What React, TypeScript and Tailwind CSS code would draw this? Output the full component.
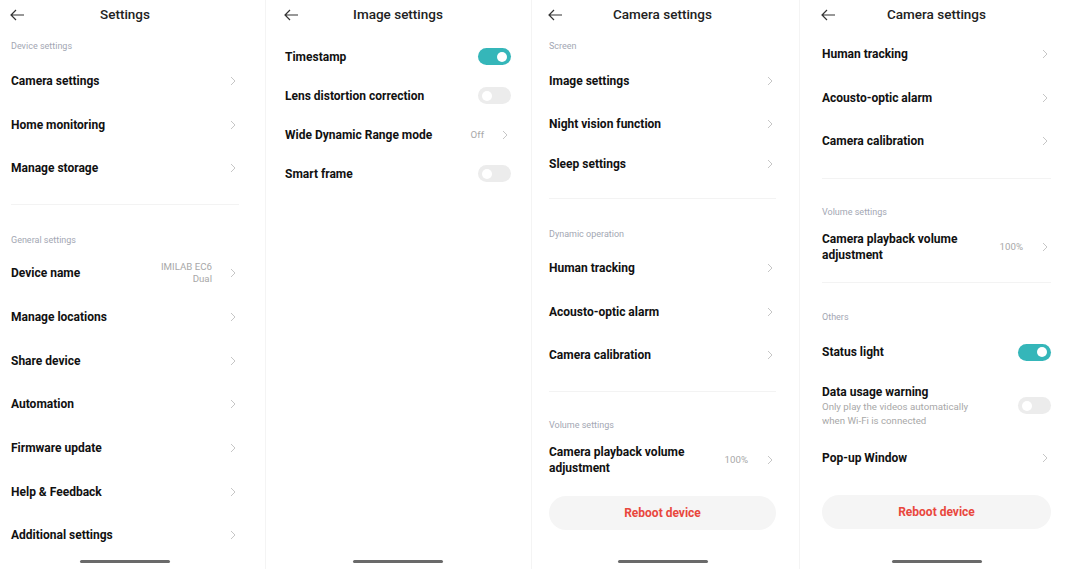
import React from "react";

type RowProps = {
  label: string;
  h: string;
  value?: React.ReactNode;
  chevron?: boolean;
  toggle?: "on" | "off";
};

const Chevron = () => (
  <svg width="6" height="10" viewBox="0 0 6 10" className="mr-[3px] shrink-0">
    <path d="M1 1 L5 5 L1 9" fill="none" stroke="#c6c6c6" strokeWidth="1" />
  </svg>
);

const Toggle = ({ on }: { on: boolean }) => (
  <div
    className={`w-[33px] h-[17px] rounded-full flex items-center px-[4px] shrink-0 ${
      on ? "bg-[#35b6b9] justify-end" : "bg-[#ececec] justify-start"
    }`}
  >
    <div className="w-[10px] h-[10px] rounded-full bg-white" />
  </div>
);

const Row = ({ label, h, value, chevron = true, toggle }: RowProps) => (
  <div className={`flex items-center justify-between ${h}`}>
    <div className="text-[12px] font-bold text-[#111] leading-[16px]">{label}</div>
    <div className="flex items-center gap-[18px]">
      {value && <div className="text-[9.7px] text-[#a8a8a8] text-right leading-[12px]">{value}</div>}
      {toggle ? <Toggle on={toggle === "on"} /> : chevron && <Chevron />}
    </div>
  </div>
);

const Header = ({ title }: { title: string }) => (
  <div className="relative h-[30px] flex items-center justify-center">
    <svg width="15" height="12" viewBox="0 0 15 12" className="absolute left-[-1px] top-[9px]">
      <path d="M14 6 H1.2 M6 1 L1 6 L6 11" fill="none" stroke="#333" strokeWidth="1.2" />
    </svg>
    <div className="text-[13.5px] font-medium text-[#222] -mt-px">{title}</div>
  </div>
);

const Label = ({ text, h }: { text: string; h: string }) => (
  <div className={`flex items-center ${h} text-[9px] text-[#a3a7b3]`}>{text}</div>
);

const Divider = ({ mt }: { mt: string }) => <div className={`${mt} h-px bg-[#f3f3f3]`} />;

const HomeBar = () => (
  <div className="mt-auto mb-[6px] flex justify-center">
    <div className="w-[90px] h-[3px] rounded-full bg-[#6a6a6a]" />
  </div>
);

const Reboot = ({ mt }: { mt: string }) => (
  <div className={`${mt} h-[34px] rounded-full bg-[#f5f5f5] flex items-center justify-center text-[12px] font-bold text-[#e9473d]`}>
    Reboot device
  </div>
);

const TwoLine = ({ h }: { h: string }) => (
  <div className={`flex items-center justify-between ${h}`}>
    <div className="text-[12px] font-bold text-[#111] leading-[16px]">
      Camera playback volume
      <br />
      adjustment
    </div>
    <div className="flex items-center gap-[19px]">
      <div className="text-[9.7px] text-[#a8a8a8]">100%</div>
      <Chevron />
    </div>
  </div>
);

export default function App() {
  return (
    <div className="w-[1076px] h-[569px] bg-white flex font-['Roboto',sans-serif] overflow-hidden">
      {/* Settings */}
      <div className="w-[266px] h-full flex flex-col pl-[11px] pr-[26px] border-r border-[#f4f4f4]">
        <Header title="Settings" />
        <Label text="Device settings" h="h-[22px] mt-[6px]" />
        <Row label="Camera settings" h="h-[45px]" />
        <Row label="Home monitoring" h="h-[43px]" />
        <Row label="Manage storage" h="h-[43px]" />
        <Divider mt="mt-[15px]" />
        <Label text="General settings" h="h-[21px] mt-[25px]" />
        <Row
          label="Device name"
          h="h-[44px]"
          value={
            <>
              IMILAB EC6
              <br />
              Dual
            </>
          }
        />
        <Row label="Manage locations" h="h-[44px]" />
        <Row label="Share device" h="h-[43px]" />
        <Row label="Automation" h="h-[44px]" />
        <Row label="Firmware update" h="h-[44px]" />
        <Row label="Help & Feedback" h="h-[43px]" />
        <Row label="Additional settings" h="h-[44px]" />
        <HomeBar />
      </div>

      {/* Image settings */}
      <div className="w-[266px] h-full flex flex-col pl-[19px] pr-[20px] border-r border-[#f4f4f4]">
        <Header title="Image settings" />
        <div className="mt-[7px]" />
        <Row label="Timestamp" h="h-[39px]" toggle="on" />
        <Row label="Lens distortion correction" h="h-[39px]" toggle="off" />
        <Row label="Wide Dynamic Range mode" h="h-[39px]" value="Off" />
        <Row label="Smart frame" h="h-[39px]" toggle="off" />
        <HomeBar />
      </div>

      {/* Camera settings */}
      <div className="w-[268px] h-full flex flex-col pl-[17px] pr-[23px] border-r border-[#f4f4f4]">
        <Header title="Camera settings" />
        <Label text="Screen" h="h-[22px] mt-[6px]" />
        <Row label="Image settings" h="h-[45px]" />
        <Row label="Night vision function" h="h-[42px]" />
        <Row label="Sleep settings" h="h-[38px]" />
        <Divider mt="mt-[15px]" />
        <Label text="Dynamic operation" h="h-[22px] mt-[25px]" />
        <Row label="Human tracking" h="h-[44px]" />
        <Row label="Acousto-optic alarm" h="h-[43px]" />
        <Row label="Camera calibration" h="h-[44px]" />
        <Divider mt="mt-[14px]" />
        <Label text="Volume settings" h="h-[22px] mt-[23px]" />
        <TwoLine h="h-[46px]" />
        <Reboot mt="mt-[13px]" />
        <HomeBar />
      </div>

      {/* Camera settings (scrolled) */}
      <div className="w-[276px] h-full flex flex-col pl-[22px] pr-[25px]">
        <Header title="Camera settings" />
        <div className="mt-[2px]" />
        <Row label="Human tracking" h="h-[44px]" />
        <Row label="Acousto-optic alarm" h="h-[43px]" />
        <Row label="Camera calibration" h="h-[44px]" />
        <Divider mt="mt-[15px]" />
        <Label text="Volume settings" h="h-[22px] mt-[23px]" />
        <TwoLine h="h-[46px]" />
        <Divider mt="mt-[12px]" />
        <Label text="Others" h="h-[22px] mt-[24px]" />
        <Row label="Status light" h="h-[46px]" toggle="on" />
        <div className="h-[61px] flex items-center justify-between">
          <div>
            <div className="text-[12px] font-bold text-[#111] leading-[16px]">Data usage warning</div>
            <div className="text-[9.7px] text-[#a8a8a8] leading-[14px]">
              Only play the videos automatically
              <br />
              when Wi-Fi is connected
            </div>
          </div>
          <Toggle on={false} />
        </div>
        <Row label="Pop-up Window" h="h-[43px]" />
        <Reboot mt="mt-[16px]" />
        <HomeBar />
      </div>
    </div>
  );
}
